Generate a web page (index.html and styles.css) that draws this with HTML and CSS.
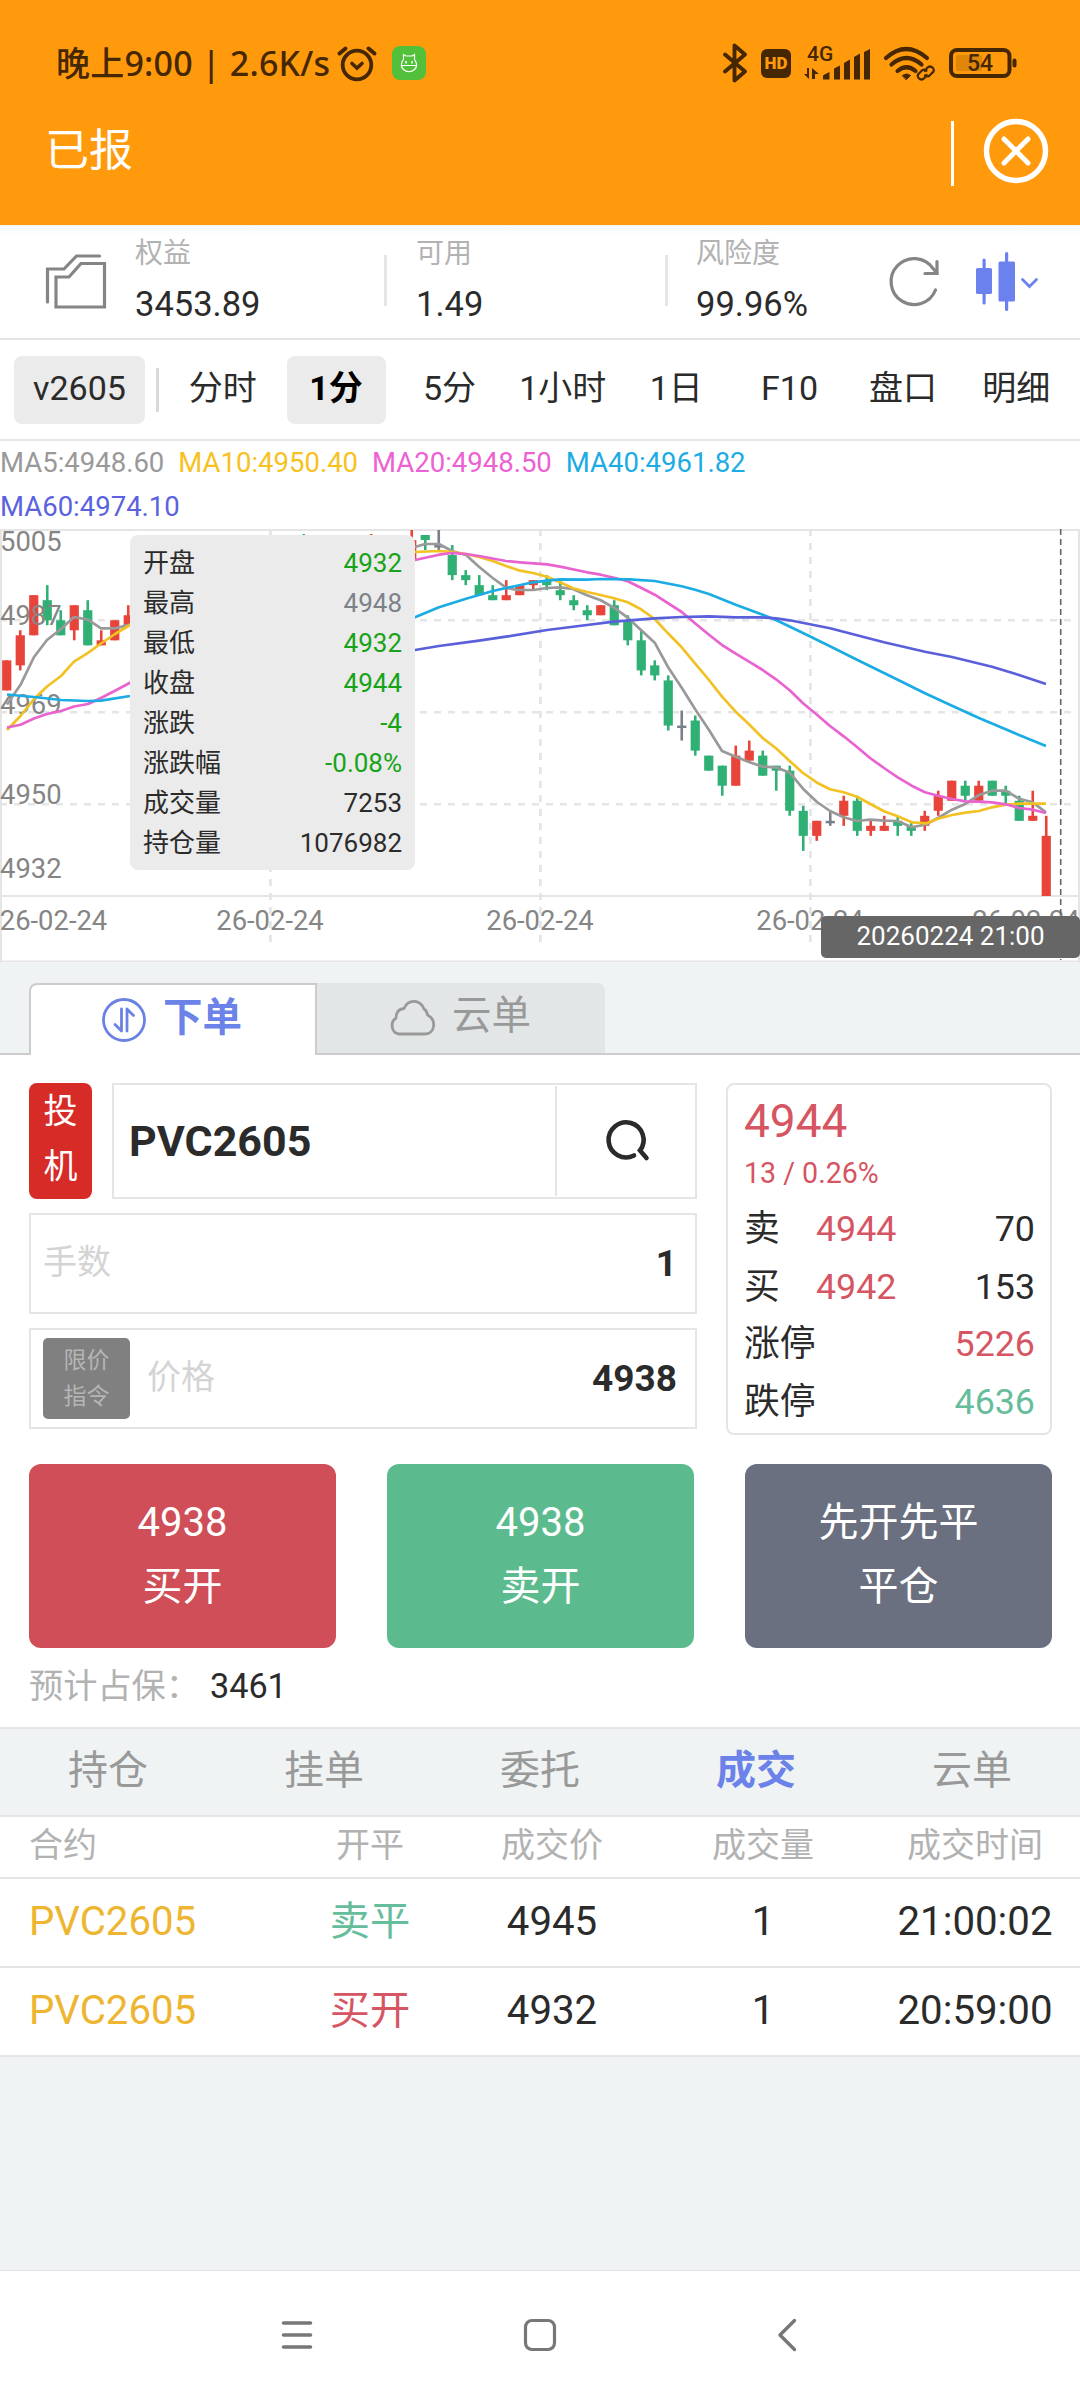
FILE: index.html
```html
<!DOCTYPE html>
<html lang="zh-CN">
<head>
    <meta charset="UTF-8">
    <meta name="viewport" content="width=device-width, initial-scale=1.0">
    <title>PVC2605</title>
    <link rel="stylesheet" href="styles.css">
</head>
<body>
    <header class="header">
        <!-- Status bar -->
        <div class="status-bar">
            <span class="status-time">晚上9:00 | 2.6K/s</span>
            <svg class="icon-alarm" width="40" height="40" viewBox="0 0 40 40" fill="none" stroke="#452703" stroke-linecap="round">
                <circle cx="20" cy="22" r="14.3" stroke-width="3.8"/>
                <path d="M15 20.5l5 4.5 5-4.5" stroke-width="3.6"/>
                <path d="M2.5 10.5l6-5M37.5 10.5l-6-5" stroke-width="4"/>
            </svg>
            <svg class="icon-app" width="34" height="34" viewBox="0 0 34 34">
                <rect width="34" height="34" rx="8" fill="#52c03a"/>
                <path d="M11.5 13.500v-5l2.500 1.500h6l2.500-1.500v5c3 4 2.500 7.500 0 10-3 3-8 3-11 0-2.500-2.500-3-6 0-10zM9.500 19.500h15" fill="none" stroke="#fff" stroke-width="1.2"/>
                <path d="M14 15v2.500M20 15v2.500" stroke="#fff" stroke-width="1.500"/>
            </svg>
            <div class="status-right">
                <svg width="26" height="40" viewBox="0 0 26 40" fill="none" stroke="#452703" stroke-width="3.900" stroke-linecap="round" stroke-linejoin="round">
                    <path d="M3 11.500L23 28.500 12.500 37.500V2.500L23 11.500 3 28.500"/>
                </svg>
                <span class="hd">HD</span>
                <svg class="icon-signal" width="68" height="38" viewBox="0 0 68 38" fill="#452703">
                    <text class="net" x="3" y="17">4G</text>
                    <path d="M5 24v11l-5-5h3v-6zM8 35v-11l7 6h-4v5z"/>
                    <path d="M19 35.500v-3q0-1.500 1.500-2l5-2.500v7.500zM30 35.500v-11l6-3v14zM40 35.500V19l6-3.500v20zM50 35.500V13l6-3.500v26zM60 35.500V8l6-3v30.500z"/>
                </svg>
                <svg class="icon-wifi" width="52" height="38" viewBox="0 0 52 38" fill="none" stroke="#452703" stroke-width="4.200" stroke-linecap="round">
                    <path d="M3 14q20-18 41 0M8.500 20.500q15-13 30 0M14.500 27q9-7.500 18 0"/>
                    <path d="M19.500 31.500q4-3 8 0l-4 4z" fill="#452703" stroke-width="1"/>
                    <path d="M42 27l2-3q3-3 6 0 2 3-1 5l-3 3q-2 1-4-.5M43.500 31l-2 3q-3 3-6 0-2-3 1-5l3-3q2-1 4 .500" stroke-width="2.200"/>
                </svg>
                <svg class="icon-battery" width="70" height="32" viewBox="0 0 70 32">
                    <rect x="2" y="3" width="58.500" height="26" rx="6" fill="none" stroke="#452703" stroke-width="4"/>
                    <rect x="7" y="8" width="26" height="16" rx="2" fill="#452703" opacity=".17"/>
                    <rect x="63.500" y="11.500" width="4" height="9" rx="2" fill="#452703"/>
                    <text class="battery-text" x="31" y="24" text-anchor="middle">54</text>
                </svg>
            </div>
        </div>
        <div class="title-bar">
            <h1>已报</h1>
            <span class="title-line"></span>
            <svg width="66" height="66" viewBox="0 0 66 66" fill="none" stroke="#fff">
                <circle cx="33" cy="33" r="29.500" stroke-width="5.500"/>
                <path d="M21 21l24 24M45 21l-24 24" stroke-width="5" stroke-linecap="round"/>
            </svg>
        </div>
    </header>

    <!-- Account summary -->
    <section class="account">
        <svg class="icon-folder" width="62" height="58" viewBox="0 0 62 58" fill="none" stroke="#858585" stroke-width="3.200" stroke-linecap="round">
            <path d="M2.500 49V16H19L31.500 3H54.500"/>
            <path d="M11 54V24H24L36 10.500H59.500V54Z"/>
        </svg>
        <div class="account-item">
            <span class="account-label">权益</span>
            <span class="account-value">3453.89</span>
        </div>
        <div class="account-item split">
            <span class="account-label">可用</span>
            <span class="account-value">1.49</span>
        </div>
        <div class="account-item split">
            <span class="account-label">风险度</span>
            <span class="account-value">99.96%</span>
        </div>
        <svg class="icon-refresh" width="52" height="54" viewBox="0 0 52 54" fill="none" stroke="#858585" stroke-width="3.200" stroke-linecap="round">
            <path d="M46.500 37A23 23 0 1 1 44 15.500L48 20"/>
            <path d="M48 8.500V20.500H36"/>
        </svg>
        <svg class="icon-candle" width="64" height="60" viewBox="0 0 64 60" fill="#6b82ee">
            <rect y="17" width="16" height="26" rx="1.500"/>
            <rect x="6.500" y="7.500" width="3.200" height="46" rx="1.500"/>
            <rect x="22.500" y="10.500" width="16.500" height="40" rx="1.500"/>
            <rect x="29" y="1" width="3.200" height="59" rx="1.500"/>
            <path d="M46.500 28.500l7 7 7-7" fill="none" stroke="#6b82ee" stroke-width="2.800" stroke-linecap="round"/>
        </svg>
    </section>

    <!-- Period tabs -->
    <nav class="periods">
        <span class="symbol">v2605</span>
        <span class="period-line"></span>
        <div class="period-list">
            <span class="period">分时</span>
            <span class="period active">1分</span>
            <span class="period">5分</span>
            <span class="period">1小时</span>
            <span class="period">1日</span>
            <span class="period">F10</span>
            <span class="period">盘口</span>
            <span class="period">明细</span>
        </div>
    </nav>

    <div class="ma-list">
        <span class="ma5">MA5:4948.60</span>
        <span class="ma10">MA10:4950.40</span>
        <span class="ma20">MA20:4948.50</span>
        <span class="ma40">MA40:4961.82</span>
        <span class="ma60">MA60:4974.10</span>
    </div>

    <section class="chart">
        <svg id="kline" width="1080" height="434" viewBox="0 529 1080 434"></svg>
        <div class="tip">
            <div class="tip-row"><span>开盘</span><b class="down">4932</b></div>
            <div class="tip-row"><span>最高</span><b class="flat">4948</b></div>
            <div class="tip-row"><span>最低</span><b class="down">4932</b></div>
            <div class="tip-row"><span>收盘</span><b class="down">4944</b></div>
            <div class="tip-row"><span>涨跌</span><b class="down">-4</b></div>
            <div class="tip-row"><span>涨跌幅</span><b class="down">-0.08%</b></div>
            <div class="tip-row"><span>成交量</span><b>7253</b></div>
            <div class="tip-row"><span>持仓量</span><b>1076982</b></div>
        </div>
        <div class="time-tip">20260224 21:00</div>
    </section>

    <div class="order-tabs">
        <div class="order-tab active">
            <svg width="46" height="46" viewBox="0 0 46 46" fill="none" stroke="#6b82e3" stroke-width="2.800" stroke-linecap="round" stroke-linejoin="round">
                <circle cx="23" cy="23" r="20.500"/>
                <path d="M20.500 12v22l-6.500-6.500M26 34V12l6.500 6.500"/>
            </svg>
            <span>下单</span>
        </div>
        <div class="order-tab">
            <svg width="46" height="40" viewBox="0 0 46 40" fill="none" stroke="#999" stroke-width="2.800" stroke-linejoin="round">
                <path d="M9 36C1 35 0 24 6 20 6 14 9 11 14 10.500 18 1 30 1 34 11 36 12 37 14 37.500 17 47 22 45 36 35 36Z"/>
            </svg>
            <span>云单</span>
        </div>
    </div>

    <!-- Order form -->
    <section class="order">
        <div class="form">
            <div class="form-row">
                <div class="hedge">投<br>机</div>
                <div class="field contract">
                    <span class="contract-name">PVC2605</span>
                    <span class="search">
                        <svg width="46" height="46" viewBox="0 0 46 46" fill="none" stroke="#2b2b2b" stroke-width="4.600" stroke-linecap="round">
                            <path d="M29 38.500A17.500 17.500 0 1 1 35 33.500L41.500 41"/>
                        </svg>
                    </span>
                </div>
            </div>
            <div class="field">
                <span class="placeholder">手数</span>
                <span class="number qty">1</span>
            </div>
            <div class="field price-field">
                <span class="limit">限价<br>指令</span>
                <span class="placeholder">价格</span>
                <span class="number">4938</span>
            </div>
        </div>
        <div class="quote">
            <div class="last">4944</div>
            <div class="change">13 / 0.26%</div>
            <div class="quote-row"><span class="side">卖</span><span class="red">4944</span><span class="right">70</span></div>
            <div class="quote-row"><span class="side">买</span><span class="red">4942</span><span class="right">153</span></div>
            <div class="quote-row"><span>涨停</span><span class="right red">5226</span></div>
            <div class="quote-row"><span>跌停</span><span class="right green">4636</span></div>
        </div>
    </section>

    <div class="actions">
        <div class="btn buy">4938<br>买开</div>
        <div class="btn sell">4938<br>卖开</div>
        <div class="btn close">先开先平<br>平仓</div>
    </div>
    <div class="margin">预计占保：<span>3461</span></div>

    <!-- Records -->
    <nav class="record-tabs">
        <span>持仓</span>
        <span>挂单</span>
        <span>委托</span>
        <span class="active">成交</span>
        <span>云单</span>
    </nav>
    <section class="records">
        <div class="record head"><span>合约</span><span>开平</span><span>成交价</span><span>成交量</span><span>成交时间</span></div>
        <div class="record"><span class="name">PVC2605</span><span class="green">卖平</span><span>4945</span><span>1</span><span>21:00:02</span></div>
        <div class="record"><span class="name">PVC2605</span><span class="red">买开</span><span>4932</span><span>1</span><span>20:59:00</span></div>
    </section>

    <footer class="nav-bar">
        <svg width="36" height="36" viewBox="0 0 36 36" stroke="#777" stroke-width="3.600" stroke-linecap="round">
            <path d="M4.500 6h27M4.500 18h27M4.500 30h27"/>
        </svg>
        <svg width="36" height="36" viewBox="0 0 36 36" fill="none" stroke="#777" stroke-width="3.200">
            <rect x="3.500" y="3.500" width="29" height="29" rx="6.500"/>
        </svg>
        <svg width="36" height="36" viewBox="0 0 36 36" fill="none" stroke="#777" stroke-width="3.400" stroke-linecap="round" stroke-linejoin="round">
            <path d="M24.500 3.500L10 18l14.500 14.500"/>
        </svg>
    </footer>

    <script src="chart.js"></script>
</body>
</html>
```

FILE: styles.css
```css
* {
    box-sizing: border-box;
}

body {
    margin: 0;
    width: 1080px;
    height: 2400px;
    display: flex;
    flex-direction: column;
    background: #eff3f4;
    color: #2b2b2b;
    font-family: Roboto, "Noto Sans CJK SC", sans-serif;
    overflow: hidden;
}

svg {
    display: block;
    flex-shrink: 0;
    overflow: visible;
}

.red {
    color: #d65562;
}

.green {
    color: #66bd9c;
}

/* Header */
.header {
    height: 225px;
    background: #ff9a0c;
}

.status-bar {
    height: 106px;
    padding: 20px 61px 0 56px;
    display: flex;
    align-items: center;
    color: #452703;
}

.status-time {
    width: 281px;
    font-family: "Noto Sans", "Noto Sans CJK SC", sans-serif;
    font-size: 34px;
    font-weight: 500;
    letter-spacing: 0.2px;
    line-height: 40px;
    white-space: nowrap;
}

.icon-app {
    margin-left: 15px;
}

.status-right {
    margin-left: auto;
    display: flex;
    align-items: center;
}

.hd {
    width: 30px;
    height: 29px;
    margin-left: 13px;
    border-radius: 6px;
    background: #452703;
    color: #ff9a0c;
    font-size: 17px;
    font-weight: 900;
    line-height: 29px;
    text-align: center;
}

.icon-signal {
    margin-left: 13px;
}

.net {
    font: 500 21px Roboto, sans-serif;
}

.icon-wifi {
    margin-left: 11px;
}

.icon-battery {
    margin-left: 14px;
}

.battery-text {
    font: 500 23px Roboto, sans-serif;
    fill: #452703;
}

.title-bar {
    height: 90px;
    padding: 0 31px 0 45px;
    display: flex;
    align-items: center;
    color: #fff;
}

.title-bar h1 {
    margin: 0;
    font-size: 44px;
    font-weight: 400;
    line-height: 60px;
}

.title-line {
    width: 3px;
    height: 65px;
    margin: 4px 29px 0 auto;
    background: #fff;
}

/* Account */
.account {
    height: 115px;
    padding-left: 45px;
    display: flex;
    align-items: center;
    background: linear-gradient(#f7f7f7, #fff 10px);
    border-bottom: 2px solid #e5e5e5;
}

.account-item {
    width: 249px;
    height: 106px;
    display: flex;
    flex-direction: column;
}

.icon-folder {
    margin-right: 28px;
}

.account-item.split {
    width: 281px;
    padding-left: 32px;
    background: linear-gradient(#e5e5e5, #e5e5e5) no-repeat 0 26px / 3px 51px;
}

.account-item.split + .account-item.split {
    width: 224px;
    padding-left: 31px;
}

.account-label {
    color: #b2b2b2;
    font-size: 28px;
    line-height: 50px;
}

.account-value {
    font-size: 34.5px;
    line-height: 50px;
}

.icon-refresh {
    margin-top: -3px;
}

.icon-candle {
    margin-left: 35px;
    margin-top: -1px;
}

/* Periods */
.periods {
    height: 101px;
    padding-left: 14px;
    display: flex;
    align-items: center;
    background: #fff;
    border-bottom: 2px solid #e5e5e5;
    font-size: 34px;
}

.symbol {
    width: 131px;
    height: 68px;
    border-radius: 8px;
    background: #ebebeb;
    line-height: 64px;
    text-align: center;
}

.period-line {
    width: 3px;
    height: 44px;
    margin: 0 7px 0 11px;
    background: #d9d9d9;
}

.period-list {
    display: flex;
}

.period {
    width: 99px;
    height: 68px;
    margin: 0 7.2px;
    border-radius: 8px;
    line-height: 64px;
    text-align: center;
    white-space: nowrap;
}

.period.active {
    background: #ebebeb;
    color: #000;
    font-weight: 700;
}

/* Chart */
.ma-list {
    height: 88px;
    padding-right: 300px;
    display: flex;
    flex-wrap: wrap;
    column-gap: 14px;
    background: #fff;
    font-size: 27.5px;
    line-height: 43px;
}

.ma5 { color: #999; }
.ma10 { color: #f7c11e; }
.ma20 { color: #ec61d3; }
.ma40 { color: #1cace4; }
.ma60 { color: #5b62de; }

.chart {
    position: relative;
    height: 434px;
    background: #fff;
}

.axis {
    font: 27.4px Roboto, sans-serif;
    fill: #858585;
}

.tip {
    position: absolute;
    left: 130px;
    top: 6px;
    width: 285px;
    height: 335px;
    padding: 8px 13px;
    border-radius: 8px;
    background: #ebebeb;
    font-size: 26px;
}

.tip-row {
    display: flex;
    justify-content: space-between;
    height: 40px;
    line-height: 40px;
}

.tip-row b {
    font-weight: 400;
}

.tip-row .down {
    color: #17a317;
}

.tip-row .flat {
    color: #7d828a;
}

.time-tip {
    position: absolute;
    right: 0;
    top: 387px;
    width: 259px;
    height: 42px;
    border-radius: 5px;
    background: #666;
    color: #fff;
    font-size: 26px;
    line-height: 41px;
    text-align: center;
}

/* Order tabs */
.order-tabs {
    height: 92px;
    padding: 20px 29px 0;
    display: flex;
    background: linear-gradient(#ccc, #ccc) no-repeat 0 100% / 100% 2px;
}

.order-tab {
    width: 288px;
    height: 70px;
    padding-left: 73px;
    display: flex;
    align-items: center;
    gap: 16px;
    border-radius: 0 8px 0 0;
    background: #e2e6e7;
    color: #999;
    font-size: 39.5px;
    line-height: 60px;
}

.order-tab span {
    margin-top: -4px;
}

.order-tab.active {
    height: 72px;
    padding-left: 70px;
    border: 2px solid #ccc;
    border-bottom: 0;
    border-radius: 8px 0 0 0;
    background: #fff;
    color: #6b82e8;
    font-weight: 700;
}

/* Order form */
.order {
    padding: 28px 28px 0 29px;
    display: flex;
    justify-content: space-between;
    background: #fff;
}

.form {
    width: 668px;
    display: flex;
    flex-direction: column;
    gap: 14px;
}

.form-row {
    display: flex;
    justify-content: space-between;
}

.hedge {
    width: 63px;
    height: 116px;
    padding-top: 1px;
    border-radius: 8px;
    background: #d62b26;
    color: #fff;
    font-size: 34px;
    line-height: 55px;
    text-align: center;
}

.field {
    height: 101px;
    padding: 0 18px 0 12px;
    display: flex;
    align-items: center;
    border: 2px solid #e5e5e5;
}

.field.contract {
    width: 585px;
    height: 116px;
    padding: 0 0 0 15px;
}

.contract-name {
    flex: 1;
    font-size: 43px;
    font-weight: 700;
    line-height: 60px;
}

.search {
    width: 140px;
    height: 110px;
    padding: 0 0 2px 3px;
    display: flex;
    align-items: center;
    justify-content: center;
    border-left: 2px solid #e5e5e5;
}

.placeholder {
    color: #d4d4d4;
    font-size: 34px;
    line-height: 50px;
    margin-top: -4px;
}

.number {
    margin-left: auto;
    font-size: 37px;
    font-weight: 700;
}

.limit {
    width: 87px;
    height: 81px;
    margin-right: 17px;
    padding-top: 5px;
    border-radius: 5px;
    background: #808080;
    color: #b5b5b5;
    font-size: 23px;
    line-height: 36px;
    text-align: center;
}

.quote {
    width: 326px;
    height: 352px;
    padding: 8px 15px 0 16px;
    border: 2px solid #e5e5e5;
    border-radius: 8px;
    font-size: 35.8px;
}

.last {
    color: #d65562;
    font-size: 46px;
    line-height: 56px;
}

.change {
    color: #d65562;
    font-size: 28.6px;
    line-height: 48px;
    margin-bottom: 4px;
}

.quote-row {
    display: flex;
    height: 57.7px;
    line-height: 57.7px;
}

.side {
    width: 72px;
}

.right {
    margin-left: auto;
}

.actions {
    padding: 29px 28px 0 29px;
    display: flex;
    justify-content: space-between;
    background: #fff;
}

.btn {
    width: 307px;
    height: 184px;
    padding-top: 27px;
    border-radius: 12px;
    color: #fff;
    font-size: 40px;
    line-height: 64px;
    text-align: center;
}

.buy { background: #cf4e57; }
.sell { background: #5cbb8e; }
.close { background: #6b7080; }

.margin {
    height: 79px;
    padding-left: 29px;
    background: #fff;
    color: #b2b2b2;
    font-size: 34.2px;
    line-height: 76px;
}

.margin span {
    margin-left: 10px;
    color: #2b2b2b;
}

/* Records */
.record-tabs {
    height: 90px;
    display: flex;
    border-top: 2px solid #e5e5e5;
    border-bottom: 2px solid #e5e5e5;
    color: #999;
    font-size: 40px;
    line-height: 84px;
}

.record-tabs span {
    flex: 1;
    text-align: center;
}

.record-tabs .active {
    color: #6b82e8;
    font-weight: 700;
}

.record {
    height: 89px;
    padding-left: 29px;
    display: grid;
    grid-template-columns: 241px 200px 164px 258px 166px;
    background: #fff;
    border-bottom: 2px solid #e5e5e5;
    font-size: 40.2px;
    line-height: 86px;
    text-align: center;
}

.record span:first-child {
    text-align: left;
}

.record.head {
    height: 62px;
    color: #b2b2b2;
    font-size: 34px;
    line-height: 56px;
}

.name {
    color: #edb530;
}

/* System navigation */
.nav-bar {
    height: 130px;
    margin-top: auto;
    padding: 46px 274px 0 279px;
    display: grid;
    grid-template-columns: 243px 248px 36px;
    border-top: 1px solid #e2e2e2;
    background: #fff;
}
```

FILE: chart.js
```js
const svg = document.getElementById('kline');
const RED = '#e8443a';
const GREEN = '#30b075';
const GREY = '#7a808a';

// [index, body top, body bottom, high, low, color]
const candles = [
    [0, 4979, 4973, 4979, 4973, RED], [1, 4984, 4978, 4985, 4977, RED], [2, 4992, 4984, 4992, 4984, RED],
    [3, 4991, 4987, 4994, 4986, GREEN], [4, 4987, 4984, 4989, 4984, GREEN], [5, 4990, 4985, 4990, 4983, RED],
    [6, 4989, 4982, 4991, 4982, GREEN], [7, 4983, 4982, 4985, 4982, RED], [8, 4987, 4983, 4987, 4983, RED],
    [9, 4988, 4986, 4990, 4986, RED], [22, 5003, 5000, 5004.2, 5000, GREEN], [27, 5003, 5000, 5004.2, 5000, RED],
    [30, 5003, 4999, 5005, 4999, RED], [31, 5004, 5003, 5004, 5001, GREEN], [32, 5002, 5002, 5005, 5001, GREY],
    [33, 5000, 4996, 5002, 4995, GREEN], [34, 4996, 4995, 4997, 4994, GREEN], [35, 4994, 4992, 4996, 4992, GREEN],
    [36, 4992, 4991, 4994, 4991, GREEN], [37, 4992, 4991, 4995, 4991, RED], [38, 4994, 4992, 4994, 4992, RED],
    [39, 4995, 4994, 4995, 4993, RED], [40, 4995, 4994, 4996, 4993, GREEN], [41, 4993, 4992, 4995, 4991, GREEN],
    [42, 4991, 4990, 4992, 4989, GREEN], [43, 4989, 4988, 4990, 4987, GREEN], [44, 4990, 4988, 4990, 4988, RED],
    [45, 4990, 4986, 4991, 4986, GREEN], [46, 4987, 4983, 4988, 4982, GREEN], [47, 4983, 4977, 4985, 4976, GREEN],
    [48, 4978, 4976, 4979, 4975, GREEN], [49, 4975, 4966, 4976, 4965, GREEN], [50, 4966, 4966, 4969, 4963, GREY],
    [51, 4967, 4961, 4968, 4960, GREEN], [52, 4960, 4957, 4960, 4957, GREEN], [53, 4958, 4954, 4958, 4952, GREEN],
    [54, 4960, 4954, 4962, 4954, RED], [55, 4961, 4959, 4963, 4959, RED], [56, 4960, 4956, 4961, 4956, GREEN],
    [57, 4958, 4957, 4958, 4953, GREEN], [58, 4957, 4949, 4958, 4948, GREEN], [59, 4949, 4944, 4950, 4941, GREEN],
    [60, 4947, 4944, 4947, 4943, RED], [61, 4947, 4947, 4949, 4946, GREY], [62, 4951, 4948, 4952, 4946, RED],
    [63, 4951, 4945, 4952, 4944, GREEN], [64, 4946, 4945, 4947, 4944, RED], [65, 4946, 4945, 4948, 4945, RED],
    [66, 4947, 4946, 4948, 4944, GREEN], [67, 4946, 4945, 4947, 4944, GREEN], [68, 4948, 4946, 4949, 4945, RED],
    [69, 4952, 4949, 4953, 4948, RED], [70, 4955, 4951, 4955, 4951, RED], [71, 4954, 4952, 4955, 4951, GREEN],
    [72, 4954, 4951, 4955, 4951, RED], [73, 4955, 4952, 4955, 4952, GREEN], [74, 4953, 4952, 4954, 4950.5, GREEN],
    [75, 4951, 4947, 4952, 4947, GREEN], [76, 4948, 4947, 4953, 4947, RED], [77, 4944, 4932, 4948, 4932, RED]
];

// Moving averages
const lines = [
    ['#999', '7,704.5 20.5,684.8 34,657 47,640 61,629 74,617 88,619.7 101,628.4 115,628.4 130,624.6 200,600 300,570 415,547 425,544 439,544 452,551 466,555 479,566.7 492.7,578 506,587.7 517,590 533,590 547,588 560,587.3 573,589 587,595.3 600.7,600.3 614,607.7 627.7,617.7 641,630 654.7,642.7 668,667 681.7,687.7 695,709 709,730 722,751 735.7,756.7 749,762 762.7,766.7 776,767.3 789.7,772.7 803,788.7 817,802 830,811 843.7,817.3 857,821 870,819.7 884,820.7 897.7,821 911.7,827.3 925,824.7 938,818 952,809.7 965.7,803.7 979,795 992,790.7 1005.7,790.7 1019,798.7 1032.7,802.3 1046,812.3'],
    ['#f2c122', '7,730 20.5,716 34,699 47,686.5 61,676 74,661.7 88,652.8 101,643.5 115,634 130,625 415,552 439,551 452,552 466,554 479,557 492.7,561 506,566 520,570.7 533,573 547,576.7 560,582.3 573,588.3 587,592 600.7,595 614,598.3 627.7,602.3 641,609.3 654.7,619 668,633.3 681.7,647.3 695,663.3 709,680 722,696.7 735.7,711.7 749,724.3 762.7,738 776,748.3 789.7,761 803,773 817,782.7 830,789.3 843.7,792.3 857,796.7 870,803.7 884,811.3 897.7,816.3 911.7,822.3 926.7,823.3 938,818.7 952,815 965.7,812.7 979,811 992,807.3 1005.7,804.7 1019,803.7 1046,803.7'],
    ['#e963d0', '7,727.5 20.5,724.8 34,718.6 47,714 61,711 74,706.5 88,704 101,698 115,690.7 130,682.8 415,560 439,554.7 452,553 466,554 479,556 506,561 520,562.3 547,564.3 560,566.7 587,572.3 600.7,574.7 614,577.7 627.7,581.3 641,587.7 654.7,594.7 681.7,612 695,623.3 709,634.7 722,645 735.7,653.7 749,661.7 762.7,670 776,679.3 789.7,690.3 803,703.3 817,714.7 830,726 843.7,736.3 857,747 870,758 884,768 897.7,777.3 911.7,785.7 925,792.3 938,795.7 952,799 965.7,801.3 979,801.7 992,802.3 1005.7,804.3 1019,808 1032.7,809.7 1046,813'],
    ['#1cace4', '7,694.5 34,697 61,700 88,701 101,700.7 130,696 415,617.3 439,607.3 466,598.7 492.7,591 517,585.7 533,582.3 547,580.7 560,579.3 587,579.7 600.7,579 630,579.3 654.7,581 681.7,586.3 695,589.7 709,594 735.7,604.7 760,613.7 776,620 803,633 830,646.3 857,659.7 897.7,679.7 925,693.3 952,705.7 979,718 1019,735 1046,746'],
    ['#5a60da', '300,664 415,650 439,646 479,640.7 506,636.7 547,630 587,625 614,621.7 654.7,618.3 681.7,617 709,616.3 735.7,617.3 760,617.3 776,618.3 789.7,620.3 830,628.3 857,635.3 884,642.3 925,651.7 952,657 992,666.7 1019,675 1046,684']
];

const prices = [[5005, 550.5], [4987, 624.5], [4969, 714], [4950, 804.3], [4932, 878.3]];

function priceY(price) {
    return 530 + (5005 - price) * 5.014;
}

let html = '';

// Grid
for (const y of [620.3, 712.3, 804.3]) {
    html += `<path d="M0 ${y}H1080" stroke="#e5e5e5" stroke-width="2.6" stroke-dasharray="7 7"/>`;
}
for (const x of [270.4, 540.4, 810.4]) {
    html += `<path d="M${x} 529V942" stroke="#e5e5e5" stroke-width="2.8" stroke-dasharray="7 7"/>`;
}
html += '<path d="M0 530H1080M0 896H1080M0 961.5H1080M1 530V961M1079 530V961" stroke="#e5e5e5" stroke-width="2" fill="none"/>';

for (const [i, top, bottom, high, low, color] of candles) {
    const x = 6.75 + i * 13.5;
    const height = Math.max(priceY(bottom) - priceY(top), 2.5);
    html += `<rect x="${x - 4.6}" y="${priceY(top)}" width="9.2" height="${height}" fill="${color}"/>`;
    html += `<rect x="${x - 1.3}" y="${priceY(high)}" width="2.6" height="${priceY(low) - priceY(high)}" fill="${color}"/>`;
}

for (const [price, y] of prices) {
    html += `<text class="axis" x="0" y="${y}">${price}</text>`;
}
for (const x of [53.5, 270, 540, 810, 1026]) {
    html += `<text class="axis" x="${x}" y="929.7" text-anchor="middle">26-02-24</text>`;
}

for (const [color, points] of lines) {
    html += `<polyline points="${points}" fill="none" stroke="${color}" stroke-width="2.7" stroke-linejoin="round"/>`;
}

// Crosshair
html += '<path d="M1060.7 529V960" stroke="#666" stroke-width="1.6" stroke-dasharray="6 4"/>';

svg.innerHTML = html;
```
